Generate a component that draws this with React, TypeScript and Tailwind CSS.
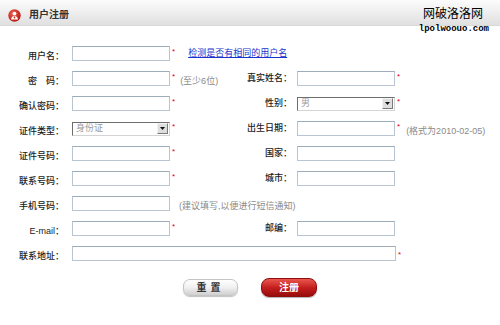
import type { ReactNode } from "react";

function Input({ wide = false }: { wide?: boolean }) {
  return (
    <div
      className={
        wide
          ? "h-[15px] w-[324px] border border-[#b9c5d1] border-t-[#9eacba] bg-white"
          : "h-[15px] w-[98px] border border-[#b9c5d1] border-t-[#9eacba] bg-white"
      }
    />
  );
}

function Select({ value }: { value: string }) {
  return (
    <div className="flex h-[14px] w-[98px] items-center border border-b-[#d4d4d4] border-l-[#6e6e6e] border-r-[#d4d4d4] border-t-[#6e6e6e] bg-white">
      <span className="flex-1 pl-[3px] text-[9px] leading-none text-[#9a9a9a]">{value}</span>
      <span className="mr-[1px] flex h-[11px] w-[11px] items-center justify-center border border-b-[#7a7a7a] border-l-[#f4f4f4] border-r-[#7a7a7a] border-t-[#f4f4f4] bg-[#dedede]">
        <svg width="5" height="3" viewBox="0 0 5 3">
          <path d="M0 0h5L2.5 3z" fill="#111" />
        </svg>
      </span>
    </div>
  );
}

function Star() {
  return <span className="relative top-[-2px] text-[8px] leading-none text-[#e0001a]">*</span>;
}

function Label({ children }: { children: ReactNode }) {
  return <span className="whitespace-nowrap text-[9px] font-medium leading-none text-[#222]">{children}</span>;
}

function Note({ children }: { children: ReactNode }) {
  return <span className="whitespace-nowrap text-[9px] leading-none text-[#8a8a8a]">{children}</span>;
}

type Row = {
  label: string;
  field: ReactNode;
  star?: boolean;
  extra?: ReactNode;
  rLabel?: string;
  rField?: ReactNode;
  rStar?: boolean;
  rExtra?: ReactNode;
};

const rows: Row[] = [
  {
    label: "用户名：",
    field: <Input />,
    star: true,
    extra: (
      <a href="#" className="ml-[13px] whitespace-nowrap text-[9px] leading-none text-[#1a33cc] underline">
        检测是否有相同的用户名
      </a>
    ),
  },
  {
    label: "密　码：",
    field: <Input />,
    star: true,
    extra: <span className="ml-[5px]"><Note>(至少6位)</Note></span>,
    rLabel: "真实姓名：",
    rField: <Input />,
    rStar: true,
  },
  { label: "确认密码：", field: <Input />, star: true, rLabel: "性别：", rField: <Select value="男" />, rStar: true },
  {
    label: "证件类型：",
    field: <Select value="身份证" />,
    star: true,
    rLabel: "出生日期：",
    rField: <Input />,
    rStar: true,
    rExtra: <span className="ml-[6px]"><Note>(格式为2010-02-05)</Note></span>,
  },
  { label: "证件号码：", field: <Input />, star: true, rLabel: "国家：", rField: <Input /> },
  { label: "联系号码：", field: <Input />, star: true, rLabel: "城市：", rField: <Input /> },
  { label: "手机号码：", field: <Input />, extra: <span className="ml-[7px]"><Note>(建议填写,以便进行短信通知)</Note></span> },
  { label: "E-mail：", field: <Input />, star: true, rLabel: "邮编：", rField: <Input /> },
];

function UserIcon() {
  return (
    <svg width="13" height="13" viewBox="0 0 13 13">
      <defs>
        <radialGradient id="rg" cx="0.4" cy="0.35" r="0.7">
          <stop offset="0" stopColor="#f0645a" />
          <stop offset="1" stopColor="#b3140c" />
        </radialGradient>
      </defs>
      <circle cx="6.5" cy="6.5" r="6.2" fill="url(#rg)" />
      <circle cx="6.5" cy="4.6" r="1.9" fill="#fff" />
      <path d="M3 10.6c0-2.3 1.6-3.7 3.5-3.7s3.5 1.4 3.5 3.7z" fill="#fff" />
      <path d="M6.5 7l-0.6 1.2 0.6 2.2 0.6-2.2z" fill="#c8261c" />
    </svg>
  );
}

export default function App() {
  return (
    <div className="relative h-[325px] w-[500px] overflow-hidden bg-white font-['Liberation_Sans','Noto_Sans_CJK_SC',sans-serif]">
      <header className="flex h-[26px] items-center gap-[4px] border-b border-[#d9d9d9] bg-gradient-to-b from-[#fcfcfc] to-[#e0e0e0] pl-[8px] pt-[5px]">
        <UserIcon />
        <span className="ml-[4px] text-[10px] font-bold leading-none text-[#333]">用户注册</span>
      </header>

      <div className="absolute right-[11px] top-[8px] flex flex-col items-end">
        <span className="mr-[6px] text-[12px] leading-none text-black">网破洛洛网</span>
        <span className="mt-[5px] font-['Liberation_Mono',monospace] text-[9px] font-bold leading-none text-black">lpolwoouo.com</span>
      </div>

      <main className="flex flex-col pt-[15px]">
        {rows.map((r) => (
          <div key={r.label} className="flex h-[25px] items-center">
            <div className="w-[64px] text-right">
              <Label>{r.label}</Label>
            </div>
            <div className="ml-[8px]">{r.field}</div>
            <div className="flex w-[122px] items-center justify-between">
              <span className="flex items-center pl-[2px]">
                {r.star && <Star />}
                {r.extra}
              </span>
              {r.rLabel && <Label>{r.rLabel}</Label>}
            </div>
            {r.rField && <div className="ml-[5px]">{r.rField}</div>}
            <span className="flex items-center pl-[2px]">
              {r.rStar && <Star />}
              {r.rExtra}
            </span>
          </div>
        ))}
        <div className="flex h-[25px] items-center">
          <div className="w-[64px] text-right">
            <Label>联系地址：</Label>
          </div>
          <div className="ml-[8px]">
            <Input wide />
          </div>
          <span className="pl-[2px]">
            <Star />
          </span>
        </div>

        <div className="mt-[12px] flex items-center justify-center gap-[23px]">
          <button className="flex h-[17px] w-[55px] items-center justify-center rounded-[7px] border border-[#c4c4c4] bg-gradient-to-b from-white via-[#f0f0f0] to-[#cfcfcf] text-[10px] font-bold leading-none tracking-[4px] text-[#333] shadow-[0_1px_1px_rgba(0,0,0,0.25)]">
              重置
          </button>
          <button className="flex h-[19px] w-[56px] items-center justify-center rounded-[8px] border border-[#8e0d0d] bg-gradient-to-b from-[#e9554d] via-[#c41e1e] to-[#980c0c] text-[10px] font-bold leading-none text-white shadow-[0_1px_1px_rgba(0,0,0,0.3)]">
            注册
          </button>
        </div>
      </main>
    </div>
  );
}
